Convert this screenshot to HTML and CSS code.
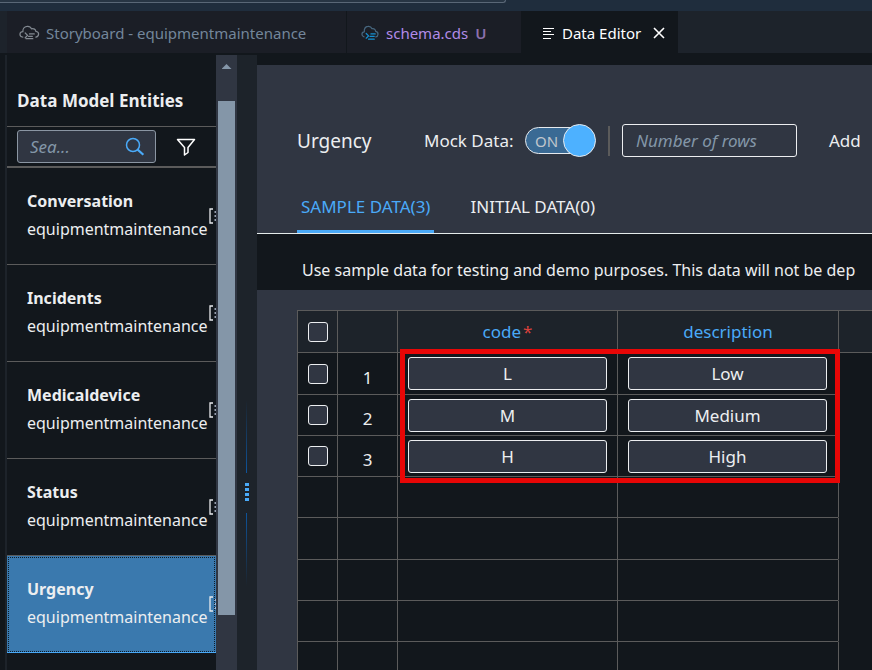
FILE: index.html
```html
<!DOCTYPE html>
<html lang="en">
<head>
<meta charset="utf-8">
<title>Data Editor</title>
<link rel="stylesheet" href="styles.css">
</head>
<body>
<div class="app">
  <div class="titlebar"><div class="command-box"></div></div>
  <nav class="tabs" aria-label="Open editors">
    <a class="tab tab-storyboard" href="#storyboard">
      <svg class="cloud" viewBox="0 0 22 16" fill="none" stroke="currentColor" stroke-width="1.3" stroke-linecap="round" stroke-linejoin="round"><path d="M4 12.2H3.6C2 12 1 10.8 1 9.300C1 7.500 2.500 6.500 4.100 6.700C3.800 3.800 5.500 1.300 8.300 1C10.500.7 12.300 1.800 13.100 3.600C15.500 2.900 17.500 4.300 17.700 6.400C19.700 6.600 20.700 7.900 20.500 9.500C20.300 11 19.200 12.200 17.600 12.200"/><path d="M6.500 8l2.500 2.500L6.500 13M11 9h5M10 11.500h4M7.500 14h7"/></svg>
      <span>Storyboard - equipmentmaintenance</span>
    </a>
    <a class="tab tab-schema" href="#schema">
      <svg class="cloud" viewBox="0 0 19 16" fill="none" stroke="#47677f" stroke-width="1.3" stroke-linecap="round" stroke-linejoin="round"><path d="M3.200 12C1.800 11.700 1 10.700 1 9.300C1 7.700 2 6.700 3.500 6.700C3.300 3.800 4.700 1.300 7.300 1C9.300.7 10.900 1.800 11.600 3.500C13.800 2.900 15.400 4.300 15.500 6.300C17.200 6.600 18.100 7.800 17.900 9.500C17.800 10.900 16.900 11.900 15.600 12.100"/><path stroke="#1590d2" d="M5.500 8.500L8 11l-2.500 2.500M10.500 9H15M9.500 11.500H14M8 14.500h6"/></svg>
      <span>schema.cds</span><span class="status">U</span>
    </a>
    <a class="tab tab-active" href="#editor" aria-current="page">
      <svg class="lines" viewBox="0 0 12 13" stroke="currentColor" stroke-width="1.200"><path d="M0 1.500h11M0 4.500h8M0 7.500h11M0 11.500h8"/></svg>
      <span>Data Editor</span>
      <button class="close" type="button" aria-label="Close"><svg viewBox="0 0 12 12" stroke="currentColor" stroke-width="1.600"><path d="M1 1l10 10M11 1L1 11"/></svg></button>
    </a>
  </nav>
  <div class="workspace">
    <aside class="sidebar">
      <h2>Data Model Entities</h2>
      <div class="toolbar">
        <div class="search">
          <input type="text" placeholder="Sea..." aria-label="Search entities">
          <svg viewBox="0 0 20 20" fill="none" stroke="#4aaaf8"><circle cx="8" cy="8" r="6.500" stroke-width="1.500"/><path stroke-width="2.200" d="M12.600 12.600l5.800 5.200"/></svg>
        </div>
        <button class="filter" type="button" aria-label="Filter"><svg viewBox="0 0 20 20" fill="none" stroke="#fff" stroke-width="1.500" stroke-linejoin="round"><path d="M1.500 2.500h17L12 10.500v5L8.500 18v-7.500z"/></svg></button>
      </div>
      <ul class="entities">
        <li><a href="#conversation"><span class="names"><strong>Conversation</strong><span>equipmentmaintenance</span></span><svg class="entity-icon" viewBox="0 0 20 17"><use href="#bracket"/></svg></a></li>
        <li><a href="#incidents"><span class="names"><strong>Incidents</strong><span>equipmentmaintenance</span></span><svg class="entity-icon" viewBox="0 0 20 17"><use href="#bracket"/></svg></a></li>
        <li><a href="#medicaldevice"><span class="names"><strong>Medicaldevice</strong><span>equipmentmaintenance</span></span><svg class="entity-icon" viewBox="0 0 20 17"><use href="#bracket"/></svg></a></li>
        <li><a href="#status"><span class="names"><strong>Status</strong><span>equipmentmaintenance</span></span><svg class="entity-icon" viewBox="0 0 20 17"><use href="#bracket"/></svg></a></li>
        <li class="selected"><a href="#urgency"><span class="names"><strong>Urgency</strong><span>equipmentmaintenance</span></span><svg class="entity-icon" viewBox="0 0 20 17"><use href="#bracket"/></svg></a></li>
      </ul>
    </aside>
    <div class="scrollbar"><i class="arrow"></i><i class="thumb"></i></div>
    <div class="splitter"><i class="line up"></i><i class="grip"></i><i class="line down"></i></div>
    <main class="editor">
      <header class="editor-head">
        <div class="controls">
          <h1>Urgency</h1>
          <label class="mock" for="mock">Mock Data:</label>
          <span class="switch"><input id="mock" type="checkbox" role="switch" checked><span class="on">ON</span><i class="knob"></i></span>
          <i class="divider"></i>
          <input class="rows" type="text" placeholder="Number of rows" aria-label="Number of rows">
          <button class="add" type="button">Add</button>
        </div>
        <div class="data-tabs" role="tablist">
          <button type="button" role="tab" aria-selected="true">SAMPLE DATA(3)</button>
          <button type="button" role="tab" aria-selected="false">INITIAL DATA(0)</button>
        </div>
      </header>
      <p class="message">Use sample data for testing and demo purposes. This data will not be dep</p>
      <div class="grid">
        <table>
          <colgroup><col class="c-check"><col class="c-num"><col class="c-code"><col class="c-desc"><col></colgroup>
          <thead><tr><th><input type="checkbox" aria-label="Select all rows"></th><th></th><th>code<span class="required">*</span></th><th>description</th><th></th></tr></thead>
          <tbody>
            <tr><td><input type="checkbox" aria-label="Select row 1"></td><td class="num">1</td><td><input type="text" value="L" aria-label="code 1"></td><td><input type="text" value="Low" aria-label="description 1"></td><td></td></tr>
            <tr><td><input type="checkbox" aria-label="Select row 2"></td><td class="num">2</td><td><input type="text" value="M" aria-label="code 2"></td><td><input type="text" value="Medium" aria-label="description 2"></td><td></td></tr>
            <tr><td><input type="checkbox" aria-label="Select row 3"></td><td class="num">3</td><td><input type="text" value="H" aria-label="code 3"></td><td><input type="text" value="High" aria-label="description 3"></td><td></td></tr>
            <tr><td></td><td></td><td></td><td></td><td></td></tr>
            <tr><td></td><td></td><td></td><td></td><td></td></tr>
            <tr><td></td><td></td><td></td><td></td><td></td></tr>
            <tr><td></td><td></td><td></td><td></td><td></td></tr>
            <tr><td></td><td></td><td></td><td></td><td></td></tr>
          </tbody>
        </table>
        <div class="highlight"></div>
      </div>
    </main>
  </div>
</div>
<svg class="defs" width="0" height="0"><symbol id="bracket" viewBox="0 0 20 17"><path fill="none" stroke="#e8eaed" stroke-width="1.300" d="M4 1H1v14h3M16 1h3v14h-3"/><path stroke="#c3cce0" stroke-width="1.300" d="M5.500 4H7M5.500 8H7M5.500 12H7M9 4h6M9 8h6M9 12h6"/></symbol></svg>
</body>
</html>
```

FILE: styles.css
```css
* { box-sizing: border-box; }
body {
  margin: 0;
  background: #12171c;
  color: #eceef0;
  font: 17px/24px "Noto Sans", "Open Sans", sans-serif;
}
a { color: inherit; text-decoration: none; }
button, input { font: inherit; color: inherit; }
button { background: none; border: 0; padding: 0; }
i { display: block; }
svg { display: block; flex: none; }
.defs { position: absolute; }
.app { display: flex; flex-direction: column; height: 100vh; overflow: hidden; }

.titlebar { flex: none; height: 11px; background: #1f2d3d; }
.command-box {
  width: 58%;
  height: 3px;
  background: #273544;
  border-bottom: 1px solid #596777;
  border-right: 1px solid #596777;
  border-bottom-right-radius: 6px;
}
.tabs {
  flex: none;
  display: flex;
  height: 42px;
  padding-left: 7px;
  background: #1d232b;
  font-size: 15px;
}
.tab { display: flex; align-items: center; white-space: nowrap; padding-top: 2px; }
.tab-storyboard { width: 340px; padding-left: 12px; gap: 6px; background: #1b1e26; color: #73869b; border-right: 1px solid #12171c; }
.tab-schema { width: 174px; padding-left: 14px; gap: 7px; background: #1b1e26; color: #b18be8; }
.tab-active { width: 157px; padding-left: 22px; gap: 7px; background: #12171c; color: #fff; }
.cloud { height: 16px; }
.tab-storyboard .cloud { width: 21px; color: #828991; }
.tab-schema .cloud { width: 18px; }
.status { color: #8c70ac; font-weight: 600; }
.lines { width: 12px; height: 13px; }
.close { margin-left: 5px; }
.close svg { width: 12px; height: 12px; }

.workspace { flex: 1; display: flex; min-height: 0; padding-top: 2px; }
.sidebar { flex: none; width: 216px; padding-left: 2px; border-left: 5px solid #12171c; background: linear-gradient(90deg, #1d232a 2px, #12171c 2px); overflow: hidden; }
.sidebar h2 { margin: 0; padding: 34px 10px 13px; font-size: 17px; font-family: "Open Sans", "Noto Sans", sans-serif; line-height: 24px; font-weight: 700; white-space: nowrap; }
.toolbar {
  display: flex;
  align-items: center;
  gap: 20px;
  height: 42px;
  padding-left: 10px;
  border-top: 1px solid #5b5b5b;
  border-bottom: 2px solid #5b5b5b;
}
.search {
  display: flex;
  align-items: center;
  width: 139px;
  height: 33px;
  padding: 0 10px 0 12px;
  background: #303642;
  border: 1px solid #8b96a3;
  border-radius: 3px;
}
.search input { flex: 1; min-width: 0; padding: 0; border: 0; background: none; outline: 0; }
::placeholder { color: #8396a8; opacity: 1; font-style: italic; }
.search svg, .filter svg { width: 20px; height: 20px; }
.entities { margin: 0; padding: 0; list-style: none; font-size: 16px; }
.entities a {
  display: flex;
  align-items: center;
  height: 97px;
  padding-left: 20px;
  border-bottom: 1px solid #5b5b5b;
  overflow: hidden;
}
.names { flex: none; display: flex; flex-direction: column; gap: 4px; width: 182px; padding-bottom: 2px; }
.entity-icon { width: 20px; height: 17px; }
.entities .selected a { background: #3a79ae; border-color: #4aaaf8; outline: 1px dotted #0d1c29; outline-offset: -2px; }

.scrollbar { flex: none; width: 21px; background: #303642; }
.arrow { margin: 9px auto 32px; width: 10px; height: 5px; background: #8496a8; clip-path: polygon(50% 0, 100% 100%, 0 100%); }
.thumb { margin: 0 2px; height: 514px; background: #8496a8; }
.splitter { flex: none; width: 20px; padding-top: 345px; background: #1d232a; }
.line { width: 1px; height: 73px; margin-left: 9px; }
.line.up { background: linear-gradient(#1d232a, #0e549c); }
.line.down { background: linear-gradient(#0e549c, #1d232a); }
.grip { width: 4px; height: 18px; margin: 10px 8px 12px; background: repeating-linear-gradient(#4aaaf8 0 3px, #1d232a 3px 5px); }

.editor { flex: 1; min-width: 0; padding-top: 10px; display: flex; flex-direction: column; }
.editor-head { flex: none; padding: 59px 0 0 40px; background: #303642; border-bottom: 1px solid #e4ebea; }
.controls { display: flex; align-items: center; height: 33px; white-space: nowrap; }
.controls h1 { flex: none; width: 127px; margin: 0; font-size: 19px; line-height: 24px; font-weight: 400; }
.mock { flex: none; width: 101px; }
.switch { position: relative; flex: none; display: flex; align-items: center; width: 71px; height: 33px; }
.switch input { appearance: none; width: 66px; height: 27px; margin: 0; background: #3a6a94; border: 1px solid #e6eaee; border-radius: 14px; }
.on { position: absolute; left: 10px; font-size: 15px; color: #c0c6cd; pointer-events: none; }
.knob { position: absolute; right: 0; width: 33px; height: 33px; background: #4db1ff; border: 1px solid #e6eaee; border-radius: 50%; pointer-events: none; }
.divider { flex: none; width: 2px; height: 30px; margin: 0 12px; background: #5b5b5b; }
.rows { flex: none; width: 175px; height: 33px; padding: 0 13px; background: #303642; border: 1px solid #eceef0; border-radius: 3px; }
.add { margin-left: 32px; }
.data-tabs { display: flex; gap: 32px; padding-top: 23px; }
.data-tabs button { height: 53px; padding: 3px 4px 0; border-bottom: 3px solid transparent; white-space: nowrap; }
.data-tabs [aria-selected="true"] { color: #4aaaf8; border-color: #4aaaf8; border-radius: 2px 2px 0 0; }
.message { flex: none; height: 56px; margin: 0; padding: 24px 0 8px 45px; font-size: 16px; white-space: nowrap; overflow: hidden; }

.grid { flex: 1; position: relative; min-height: 0; padding: 20px 0 0 40px; background: #303642; overflow: hidden; }
table { width: 100%; table-layout: fixed; border-spacing: 0; background: #12171c; }
.c-check { width: 40px; }
.c-num { width: 60px; }
.c-code { width: 220px; }
.c-desc { width: 221px; }
th, td { height: 41px; padding: 0; border: 1px solid #5b5b5b; border-width: 1px 0 0 1px; text-align: center; font-weight: 400; }
th { height: 42px; background: #1d232a; color: #4aaaf8; padding-top: 1px; }
tbody tr:nth-child(4n + 1) td { height: 42px; }
tbody tr + tr td:last-child { border-top-color: transparent; }
.num { padding-top: 8px; }
.required { margin-left: 2px; color: #d9413c; }
td input, th input { display: block; margin: 0 auto; background: #303642; border: 1px solid #eceef0; border-radius: 3px; }
.grid input[type="checkbox"] { appearance: none; width: 20px; height: 20px; }
.grid input[type="text"] { width: 199px; height: 33px; margin-left: 10px; padding: 0; text-align: center; }
.highlight { position: absolute; left: 143px; top: 59px; width: 440px; height: 134px; border: 5px solid #e80606; pointer-events: none; }
```
